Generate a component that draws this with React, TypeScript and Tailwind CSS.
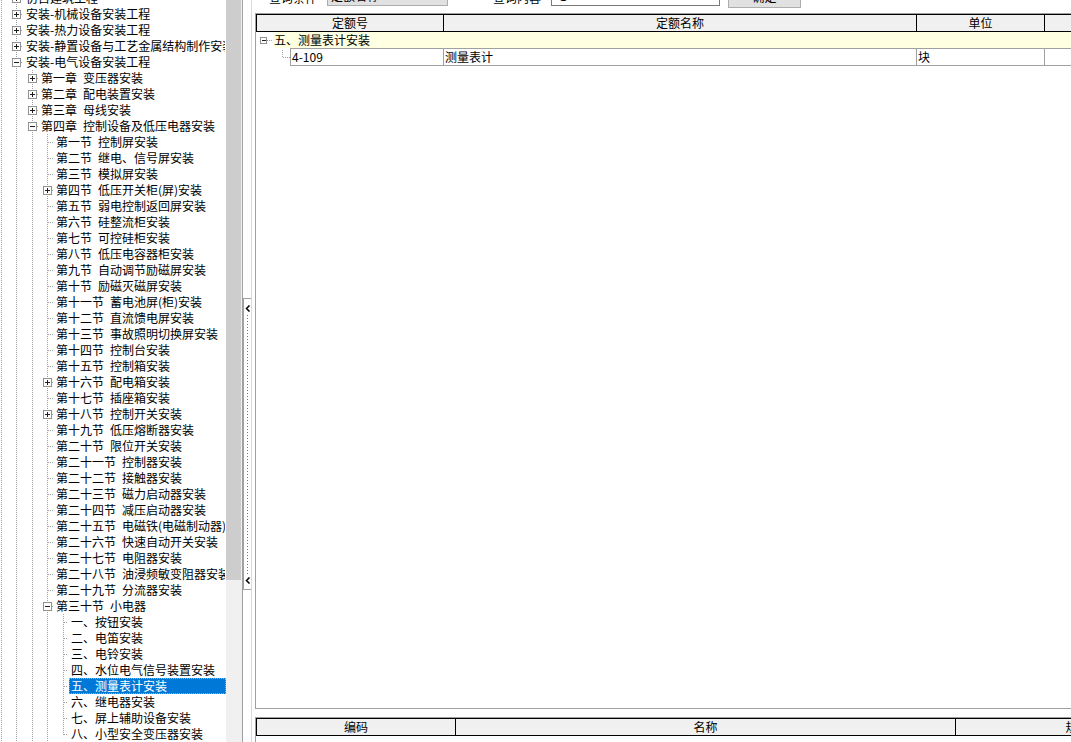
import React from 'react';

type Row = { l: number; t: string; e?: '+' | '-'; last?: boolean; sel?: boolean };

const S = '\u2002';

const rows: Row[] = [
  { l: 0, t: '仿古建筑工程', e: '+' },
  { l: 0, t: '安装-机械设备安装工程', e: '+' },
  { l: 0, t: '安装-热力设备安装工程', e: '+' },
  { l: 0, t: '安装-静置设备与工艺金属结构制作安装工程', e: '+' },
  { l: 0, t: '安装-电气设备安装工程', e: '-' },
  { l: 1, t: `第一章${S}变压器安装`, e: '+' },
  { l: 1, t: `第二章${S}配电装置安装`, e: '+' },
  { l: 1, t: `第三章${S}母线安装`, e: '+' },
  { l: 1, t: `第四章${S}控制设备及低压电器安装`, e: '-' },
  { l: 2, t: `第一节${S}控制屏安装` },
  { l: 2, t: `第二节${S}继电、信号屏安装` },
  { l: 2, t: `第三节${S}模拟屏安装` },
  { l: 2, t: `第四节${S}低压开关柜(屏)安装`, e: '+' },
  { l: 2, t: `第五节${S}弱电控制返回屏安装` },
  { l: 2, t: `第六节${S}硅整流柜安装` },
  { l: 2, t: `第七节${S}可控硅柜安装` },
  { l: 2, t: `第八节${S}低压电容器柜安装` },
  { l: 2, t: `第九节${S}自动调节励磁屏安装` },
  { l: 2, t: `第十节${S}励磁灭磁屏安装` },
  { l: 2, t: `第十一节${S}蓄电池屏(柜)安装` },
  { l: 2, t: `第十二节${S}直流馈电屏安装` },
  { l: 2, t: `第十三节${S}事故照明切换屏安装` },
  { l: 2, t: `第十四节${S}控制台安装` },
  { l: 2, t: `第十五节${S}控制箱安装` },
  { l: 2, t: `第十六节${S}配电箱安装`, e: '+' },
  { l: 2, t: `第十七节${S}插座箱安装` },
  { l: 2, t: `第十八节${S}控制开关安装`, e: '+' },
  { l: 2, t: `第十九节${S}低压熔断器安装` },
  { l: 2, t: `第二十节${S}限位开关安装` },
  { l: 2, t: `第二十一节${S}控制器安装` },
  { l: 2, t: `第二十二节${S}接触器安装` },
  { l: 2, t: `第二十三节${S}磁力启动器安装` },
  { l: 2, t: `第二十四节${S}减压启动器安装` },
  { l: 2, t: `第二十五节${S}电磁铁(电磁制动器)安装` },
  { l: 2, t: `第二十六节${S}快速自动开关安装` },
  { l: 2, t: `第二十七节${S}电阻器安装` },
  { l: 2, t: `第二十八节${S}油浸频敏变阻器安装` },
  { l: 2, t: `第二十九节${S}分流器安装` },
  { l: 2, t: `第三十节${S}小电器`, e: '-' },
  { l: 3, t: '一、按钮安装' },
  { l: 3, t: '二、电笛安装' },
  { l: 3, t: '三、电铃安装' },
  { l: 3, t: '四、水位电气信号装置安装' },
  { l: 3, t: '五、测量表计安装', sel: true },
  { l: 3, t: '六、继电器安装' },
  { l: 3, t: '七、屏上辅助设备安装' },
  { l: 3, t: '八、小型安全变压器安装', last: true },
];

const LX = [16, 32, 47, 63];
const LC = '#a0a0a0';

function TreeGlyph({ r }: { r: Row }) {
  const W = 24 + 15 * r.l;
  const lx = LX[r.l];
  const anc = [1, ...LX.slice(0, r.l)];
  return (
    <svg width={W} height={16} className="shrink-0" shapeRendering="crispEdges">
      {anc.map((x) => (
        <line key={x} x1={x + 0.5} y1={0} x2={x + 0.5} y2={16} stroke={LC} strokeDasharray="1 1" />
      ))}
      <line x1={lx + 0.5} y1={0} x2={lx + 0.5} y2={r.last ? 9 : 16} stroke={LC} strokeDasharray="1 1" />
      <line x1={r.e ? lx + 5 : lx + 1} y1={8.5} x2={W - 1} y2={8.5} stroke={LC} strokeDasharray="1 1" />
      {r.e && (
        <g>
          <rect x={lx - 3.5} y={4.5} width={8} height={8} fill="white" stroke="#919191" />
          <line x1={lx - 2} y1={8.5} x2={lx + 3} y2={8.5} stroke="#1e1e1e" />
          {r.e === '+' && <line x1={lx + 0.5} y1={6} x2={lx + 0.5} y2={11} stroke="#1e1e1e" />}
        </g>
      )}
    </svg>
  );
}

function TreeRow({ r }: { r: Row }) {
  return (
    <div className="flex h-[16px]">
      <TreeGlyph r={r} />
      <div
        className={
          r.sel
            ? 'min-w-0 flex-1 overflow-hidden whitespace-nowrap border border-dotted border-[#e8a050] bg-[#0078d7] pl-[1px] leading-[14px] text-white'
            : 'min-w-0 flex-1 overflow-hidden whitespace-nowrap border border-transparent pl-[1px] leading-[14px]'
        }
      >
        {r.t}
      </div>
    </div>
  );
}

function Chevron() {
  return (
    <svg width="6" height="7" viewBox="0 0 6 7" className="shrink-0">
      <path d="M4.5 0.5 L1.5 3.5 L4.5 6.5" fill="none" stroke="#000" strokeWidth="1.5" />
    </svg>
  );
}

export default function App() {
  return (
    <div className="flex h-[742px] w-[1071px] overflow-hidden bg-white text-[12px] text-black font-['Noto_Sans_CJK_SC',sans-serif]">
      {/* Tree */}
      <div className="w-[226px] shrink-0 overflow-hidden">
        <div className="-mt-[10px]">
          {rows.map((r, i) => (
            <TreeRow key={i} r={r} />
          ))}
        </div>
      </div>

      {/* Scrollbar */}
      <div className="w-[16px] shrink-0 bg-[#f0f0f0]">
        <div className="h-[580px] w-[15px] bg-[#cdcdcd]" />
      </div>
      <div className="w-px shrink-0 bg-[#a0a0a0]" />

      {/* Splitter */}
      <div className="flex w-[12px] shrink-0">
        <div className="w-[9px] border-r border-[#dadada] pt-[298px]">
          <div className="flex h-[292px] w-[8px] flex-col items-center border-y border-l border-[#a0a0a0] pb-[5px] pt-[6px]">
            <Chevron />
            <div className="my-[3px] w-px flex-1 bg-[linear-gradient(#2f7fd8_1px,transparent_1px)] bg-[length:1px_3px]" />
            <Chevron />
          </div>
        </div>
      </div>

      {/* Right panel */}
      <div className="flex min-w-0 flex-1 flex-col overflow-hidden">
        {/* Toolbar (cut off) */}
        <div className="flex h-[13px] shrink-0 items-start overflow-hidden">
          <span className="-mt-[10px] ml-[14px] w-[48px] shrink-0 whitespace-nowrap leading-[16px]">查询条件</span>
          <div className="-mt-[15px] ml-[10px] flex h-[21px] w-[121px] shrink-0 items-center border border-[#adadad] bg-[#e1e1e1] pl-[3px] leading-[16px]">
            定额名称
          </div>
          <span className="-mt-[10px] ml-[45px] w-[48px] shrink-0 whitespace-nowrap leading-[16px]">查询内容</span>
          <div className="-mt-[16px] ml-[10px] flex h-[22px] w-[169px] shrink-0 items-center border border-[#7a7a7a] bg-white pl-[3px] leading-[16px]">
            电
          </div>
          <div className="-mt-[14px] ml-[8px] flex h-[22px] w-[73px] shrink-0 items-center justify-center border border-[#adadad] bg-[#e1e1e1] leading-[16px]">
            确定
          </div>
        </div>

        {/* Main grid */}
        <div className="h-[696px] shrink-0 overflow-hidden border-y border-l border-[#a0a0a0]">
          <div className="flex h-[18px] w-max border-y border-l border-black bg-[#f0f0f0] leading-[16px]">
            <div className="w-[187px] border-r border-black text-center">定额号</div>
            <div className="w-[473px] border-r border-black text-center">定额名称</div>
            <div className="w-[128px] border-r border-black text-center">单位</div>
            <div className="w-[200px] border-r border-black text-center">单价</div>
          </div>
          <div className="flex h-[16px]">
            <svg width="17" height="16" className="shrink-0" shapeRendering="crispEdges">
              <rect x={4.5} y={5.5} width={6} height={6} fill="white" stroke="#919191" />
              <line x1={6} y1={8.5} x2={10} y2={8.5} stroke="#1e1e1e" />
              <line x1={11} y1={8.5} x2={17} y2={8.5} stroke={LC} strokeDasharray="1 1" />
            </svg>
            <div className="flex-1 whitespace-nowrap bg-[#ffffe1] pl-[1px] leading-[16px]">五、测量表计安装</div>
          </div>
          <div className="flex h-[18px]">
            <svg width="34" height="18" className="shrink-0" shapeRendering="crispEdges">
              <line x1={26.5} y1={2} x2={26.5} y2={10} stroke={LC} strokeDasharray="1 1" />
              <line x1={27} y1={9.5} x2={34} y2={9.5} stroke={LC} strokeDasharray="1 1" />
            </svg>
            <div className="flex w-max border-y border-l border-[#a0a0a0] leading-[16px]">
              <div className="w-[153px] border-r border-[#a0a0a0] pl-[1px]">4-109</div>
              <div className="w-[473px] border-r border-[#a0a0a0] pl-[1px]">测量表计</div>
              <div className="w-[128px] border-r border-[#a0a0a0] pl-[1px]">块</div>
              <div className="w-[200px] border-r border-[#a0a0a0] pl-[1px]"></div>
            </div>
          </div>
        </div>

        <div className="h-[8px] shrink-0" />

        {/* Bottom grid */}
        <div className="flex-1 overflow-hidden border-l border-t border-[#a0a0a0]">
          <div className="flex h-[18px] w-max border-y border-l border-black bg-[#f0f0f0] leading-[16px]">
            <div className="w-[199px] border-r border-black text-center">编码</div>
            <div className="w-[500px] border-r border-black text-center">名称</div>
            <div className="w-[244px] border-r border-black text-center">规格</div>
          </div>
        </div>
      </div>
    </div>
  );
}
